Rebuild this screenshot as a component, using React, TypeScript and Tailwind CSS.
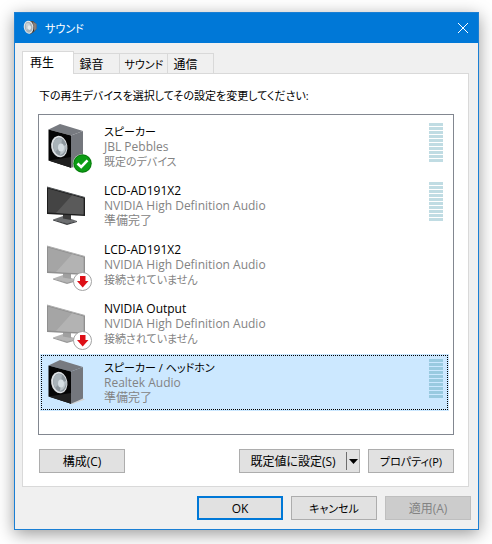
import { useState } from "react";
import clsx from "clsx";

type Status = "default" | "ready" | "unplugged";

interface Device {
  id: number;
  name: string;
  driver: string;
  state: string;
  kind: "speaker" | "monitor";
  status: Status;
}

const devices: Device[] = [
  { id: 1, name: "スピーカー", driver: "JBL Pebbles", state: "既定のデバイス", kind: "speaker", status: "default" },
  { id: 2, name: "LCD-AD191X2", driver: "NVIDIA High Definition Audio", state: "準備完了", kind: "monitor", status: "ready" },
  { id: 3, name: "LCD-AD191X2", driver: "NVIDIA High Definition Audio", state: "接続されていません", kind: "monitor", status: "unplugged" },
  { id: 4, name: "NVIDIA Output", driver: "NVIDIA High Definition Audio", state: "接続されていません", kind: "monitor", status: "unplugged" },
  { id: 5, name: "スピーカー / ヘッドホン", driver: "Realtek Audio", state: "準備完了", kind: "speaker", status: "ready" },
];

const tabs = [
  { label: "再生", width: "w-[52px]" },
  { label: "録音", width: "w-[46px]" },
  { label: "サウンド", width: "w-[48px]" },
  { label: "通信", width: "w-[46px]" },
];

function TitleIcon() {
  return (
    <svg width="16" height="16" viewBox="0 0 16 16" aria-hidden="true">
      <path d="M5 1 L10 1 L13.5 4 V9 L11 12 L7 14.500 Z" fill="#55504d" />
      <path d="M10 2 L13.500 4 V9 L11 11Z" fill="#8b7f78" />
      <path d="M9 6 L11 7 V11 L8 13Z" fill="#2b2b2b" />
      <ellipse cx="5.6" cy="7.2" rx="4.8" ry="6.6" transform="rotate(-8 5.6 7.2)" fill="#e6eaec" />
      <ellipse cx="5.6" cy="7.3" rx="3.9" ry="5.5" transform="rotate(-8 5.6 7.3)" fill="#aab4ba" />
      <path d="M3 4 Q5 2 7 4 L6 8 L3.500 10Z" fill="#c9d1d5" />
      <ellipse cx="6.4" cy="7.6" rx="1.7" ry="2.3" fill="#e4eaed" />
    </svg>
  );
}

function Speaker() {
  return (
    <>
      <path d="M26 48 L39 42.500 L41 43.500 L29 48Z" fill="#d4d4d4" />
      <path d="M4.5 9.5 L16 4 L39 11 L27 15.5Z" fill="#777a80" />
      <path d="M27 15.5 L39 11 V42.5 L27 47.8Z" fill="#74777d" />
      <path d="M4.5 9.5 L27 15.5 V47.8 L4.5 40.5Z" fill="#050505" />
      <path d="M4.5 40.5 L27 37 V47.8Z" fill="#1f1f1f" />
      <ellipse cx="15.3" cy="26.6" rx="8.1" ry="10.8" transform="rotate(-10 15.3 26.6)" fill="#dce0e3" />
      <ellipse cx="15.8" cy="26.6" rx="6.7" ry="9.2" transform="rotate(-10 15.8 26.6)" fill="#8d979e" />
      <path d="M10 21 Q13 16.500 18 19 L17 26 L11 32 Q8.500 27 10 21Z" fill="#a9b3b9" />
      <path d="M17 27 L22 25 Q22 33 16 35Z" fill="#bcc5ca" />
      <ellipse cx="17" cy="27.500" rx="3" ry="4" fill="#d5dee3" />
    </>
  );
}

function Monitor({ dim }: { dim: boolean }) {
  return (
    <>
      <path d="M9 40.500 L19 37 L33 42 L23 45Z" fill={dim ? "#b5b5b5" : "#6c6e70"} />
      <path d="M9 40.500 L23 44.500 L33 42 V43 L23 46 L9 41.500Z" fill={dim ? "#999999" : "#3f4143"} />
      <path d="M19 35 L27 36 V41 L19 39.500Z" fill={dim ? "#a0a0a0" : "#3c3c3c"} />
      <path d="M3 8 L41 18.500 V37 L3 35Z" fill={dim ? "#8f8f8f" : "#1d1d1d"} />
      <path d="M4 9.500 L39.500 19.500 V35.500 L4 33.500Z" fill={dim ? "#a5a5a5" : "#444444"} />
      <path d="M28 16.300 L39.500 19.500 V35.500 L12 34Z" fill={dim ? "#b3b3b3" : "#5a5a5a"} />
      <path d="M3 8 L41 18.500" stroke={dim ? "#b0b0b0" : "#55585a"} strokeWidth="1" />
    </>
  );
}

function DeviceIcon({ kind, status }: { kind: Device["kind"]; status: Status }) {
  return (
    <svg width="52" height="54" viewBox="0 0 52 54" aria-hidden="true" className="shrink-0">
      {kind === "speaker" ? <Speaker /> : <Monitor dim={status === "unplugged"} />}
      {status === "default" && (
        <g>
          <circle cx="38.5" cy="43.5" r="9.6" fill="#e8f3e8" />
          <circle cx="38.5" cy="43.5" r="9.2" fill="#057a0a" />
          <circle cx="38.5" cy="43.5" r="8.300" fill="#0c9c14" />
          <path d="M33.500 43.500 L37.200 47 L43.500 40.300" fill="none" stroke="#fff" strokeWidth="2.6" />
        </g>
      )}
      {status === "unplugged" && (
        <g>
          <circle cx="38.500" cy="43.500" r="9" fill="#fff" stroke="#a3a3a3" strokeWidth="1" />
          <path d="M36 38 H41.500 V43 H44.500 L38.700 49.500 L33 43 H36Z" fill="#dd0f16" />
        </g>
      )}
    </svg>
  );
}

function LevelMeter({ selected }: { selected: boolean }) {
  return (
    <div className="flex w-[14px] flex-col gap-px pt-[3px]">
      {Array.from({ length: 10 }, (_, i) => (
        <div key={i} className={clsx("h-[3px]", selected ? "bg-[#99cae0]" : "bg-[#c0dce3]")} />
      ))}
    </div>
  );
}

// labels made mostly of kana are set one size down
const hasKana = (text: string) => /[\u3040-\u30ff]/.test(text);

const buttonBase = "flex h-6 items-center justify-center whitespace-nowrap border border-[#adadad] bg-[#e1e1e1]";

export default function App() {
  const [activeTab, setActiveTab] = useState(0);
  const [selected, setSelected] = useState(5);

  return (
    <div className="min-h-screen bg-white pt-3 pr-[13px] pb-[14px] pl-[14px] font-['Open_Sans','Noto_Sans_CJK_JP',sans-serif] text-[12px] leading-[15px] text-black [font-feature-settings:'palt']">
      <main className="border border-[#1a7fd4] bg-[#f0f0f0] shadow-[0_4px_16px_rgba(0,0,0,0.4)]">
        <header className="flex h-[30px] items-center bg-[#0078d7] pr-[10px] pl-2 text-white">
          <TitleIcon />
          <h1 className="ml-[6px] grow text-[11px]">サウンド</h1>
          <button type="button" aria-label="閉じる">
            <svg width="10" height="10" viewBox="0 0 10 10" stroke="#fff" fill="none">
              <path d="M0 0 L10 10 M10 0 L0 10" />
            </svg>
          </button>
        </header>

        <div className="pt-2 pr-[9px] pl-[7px]">
          <div role="tablist" className="flex h-[22px] items-end">
            {tabs.map((tab, i) => (
              <button
                key={tab.label}
                type="button"
                role="tab"
                aria-selected={activeTab === i}
                onClick={() => setActiveTab(i)}
                className={clsx(
                  "border-t border-r border-[#d9d9d9] text-center whitespace-nowrap",
                  tab.width,
                  activeTab === i ? "relative -mb-px h-[23px] border-l bg-white pr-3 pb-[2px]" : "h-5 pt-px",
                  hasKana(tab.label) ? "pl-px text-[11px]" : activeTab !== i && "pr-[10px]"
                )}
              >
                {tab.label}
              </button>
            ))}
          </div>

          <section className="border border-[#d9d9d9] bg-white pt-[14px] pr-[14px] pb-[13px] pl-[15px]">
            <p id="device-hint" className="mb-[11px] pl-px text-[11px] whitespace-nowrap">
              下の再生デバイスを選択してその設定を変更してください:
            </p>
            <ul
              role="listbox"
              aria-labelledby="device-hint"
              className="flex flex-col gap-[2px] border border-[#828790] pt-[3px] pr-1 pb-[23px] pl-px"
            >
              {devices.map((device) => (
                <li
                  key={device.id}
                  role="option"
                  aria-selected={selected === device.id}
                  onClick={() => setSelected(device.id)}
                  className={clsx("h-[57px] p-px", selected === device.id && "bg-[#cce8ff]")}
                >
                  <div
                    className={clsx(
                      "flex h-[55px] border border-dotted pr-1 pl-[2px]",
                      selected === device.id ? "border-black" : "border-transparent"
                    )}
                  >
                    <DeviceIcon kind={device.kind} status={device.status} />
                    <div className="ml-2 grow pt-1 text-[#838383]">
                      <div className={clsx("text-black", hasKana(device.name) && "text-[11px]")}>{device.name}</div>
                      <div>{device.driver}</div>
                      <div className={clsx(hasKana(device.state) && "text-[11px]")}>{device.state}</div>
                    </div>
                    {device.status !== "unplugged" && <LevelMeter selected={selected === device.id} />}
                  </div>
                </li>
              ))}
            </ul>

            <div className="mt-[14px] flex gap-2 pl-px">
              <button type="button" className={clsx(buttonBase, "mr-auto w-[86px]")}>
                構成(C)
              </button>
              <div className={clsx(buttonBase, "w-[121px]")}>
                <button type="button" className="grow text-center">
                  既定値に設定(S)
                </button>
                <button
                  type="button"
                  aria-label="既定値のオプション"
                  className="flex h-[18px] w-[13px] items-center justify-center border-l border-[#6d6d6d]"
                >
                  <svg width="9" height="5" viewBox="0 0 9 5">
                    <path d="M0 0 H9 L4.5 5Z" fill="#000" />
                  </svg>
                </button>
              </div>
              <button type="button" className={clsx(buttonBase, "w-[86px] text-[11px]")}>
                プロパティ(P)
              </button>
            </div>
          </section>
        </div>

        <footer className="flex justify-end gap-2 pt-[9px] pr-[7px] pb-[9px]">
          <button type="button" className="flex h-6 w-[86px] items-center justify-center border-2 border-[#0078d7] bg-[#e1e1e1]">
            OK
          </button>
          <button type="button" className={clsx(buttonBase, "w-[86px] text-[11px]")}>
            キャンセル
          </button>
          <button
            type="button"
            disabled
            className="flex h-6 w-[86px] items-center justify-center border border-[#bfbfbf] bg-[#cccccc] text-[#838383]"
          >
            適用(A)
          </button>
        </footer>
      </main>
    </div>
  );
}
